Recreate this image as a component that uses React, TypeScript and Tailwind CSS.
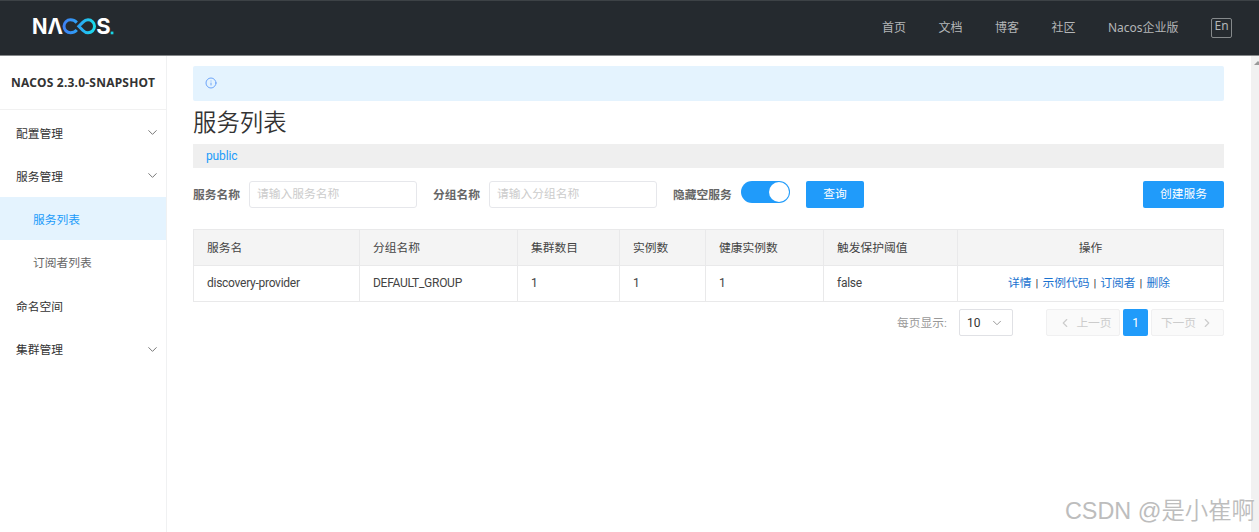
import { ChevronDown, ChevronLeft, ChevronRight, Info } from 'lucide-react';

const navItems = [
  { label: '首页', width: 'w-[56.5px]' },
  { label: '文档', width: 'w-[56.5px]' },
  { label: '博客', width: 'w-[56.5px]' },
  { label: '社区', width: 'w-[56.5px]' },
  { label: 'Nacos企业版', width: 'w-[103px]' },
];

const menu = [
  { label: '配置管理', expandable: true },
  { label: '服务管理', expandable: true },
  { label: '服务列表', child: true, active: true },
  { label: '订阅者列表', child: true },
  { label: '命名空间' },
  { label: '集群管理', expandable: true },
];

const columns = ['服务名', '分组名称', '集群数目', '实例数', '健康实例数', '触发保护阈值'];
const services = [['discovery-provider', 'DEFAULT_GROUP', '1', '1', '1', 'false']];
const actions = ['详情', '示例代码', '订阅者', '删除'];

function Logo() {
  return (
    <svg width="92" height="40" viewBox="-4 -8 92 40" aria-label="NACOS" className="ml-7 mt-[7px] shrink-0">
      <defs>
        <linearGradient id="loop" gradientUnits="userSpaceOnUse" x1="31" y1="0" x2="64" y2="0">
          <stop offset="0" stopColor="#3f7ff5" />
          <stop offset="0.5" stopColor="#2ba6f5" />
          <stop offset="1" stopColor="#18e0ea" />
        </linearGradient>
      </defs>
      <g fill="#fff" fontFamily="Inter" fontWeight="700" fontSize="21">
        <text x="0" y="18.3" textLength="15.5" lengthAdjust="spacingAndGlyphs">N</text>
        <text x="15.6" y="18.3" textLength="15.5" lengthAdjust="spacingAndGlyphs">Λ</text>
        <text x="64.2" y="18.3" textLength="14.4" lengthAdjust="spacingAndGlyphs">S</text>
      </g>
      <path
        d="M44.8 6.6 C43.1 4.8 41 3.8 38.5 3.8 A6.5 6.5 0 0 0 38.5 16.8 C41 16.8 43.1 15.8 44.8 14"
        fill="none"
        stroke="url(#loop)"
        strokeWidth="3"
      />
      <path
        d="M46.8 10.3 L51 6.1 C52.6 4.5 54.2 3.8 56 3.8 A6.5 6.5 0 0 1 56 16.8 C54.2 16.8 52.6 16.1 51 14.5 Z"
        fill="none"
        stroke="url(#loop)"
        strokeWidth="3"
      />
      <rect x="78.7" y="15.6" width="2.7" height="2.7" fill="#18d5e5" />
    </svg>
  );
}

function Header() {
  return (
    <header className="flex h-[56px] shrink-0 justify-between border-b border-t border-b-[#85888a] border-t-[#3d4246] bg-[#252a2f] pr-[27px] text-[#b4b6b8]">
      <Logo />
      <nav className="flex h-[53px] items-center font-['Noto_Sans','Noto_Sans_CJK_SC',sans-serif]">
        {navItems.map((item) => (
          <a key={item.label} className={`${item.width} whitespace-nowrap text-[12px]`}>
            {item.label}
          </a>
        ))}
        <span className="flex h-[20px] w-[21px] items-center justify-center rounded-[2px] border border-[#85898b] pb-[3px] text-[12px]">
          En
        </span>
      </nav>
    </header>
  );
}

function Sidebar() {
  return (
    <aside className="w-[167px] shrink-0 border-r border-[#f0f1f2]">
      <div className="flex h-[54.4px] items-center whitespace-nowrap border-b border-[#f1f1f1] pl-[11px] font-['Noto_Sans',sans-serif] text-[12px] font-bold tracking-[0.22px] text-[#333]">
        NACOS 2.3.0-SNAPSHOT
      </div>
      <ul>
        {menu.map((item) => (
          <li
            key={item.label}
            className={`flex h-[43.3px] items-center justify-between pr-[6px] pt-[3px] ${item.child ? 'pl-[33px]' : 'pl-4'} ${
              item.active ? 'bg-[#e4f3fe] text-[#209bfa]' : item.child ? 'text-[#666]' : 'text-[#333]'
            }`}
          >
            {item.label}
            {item.expandable && <ChevronDown size={15} strokeWidth={1.6} className="-mt-0.5 text-[#777]" />}
          </li>
        ))}
      </ul>
    </aside>
  );
}

function SearchBar() {
  return (
    <div className="mt-[13px] flex h-[27px] items-center">
      <label className="w-[56px] font-bold text-[#666]">服务名称</label>
      <input
        placeholder="请输入服务名称"
        className="h-[27px] w-[168px] rounded-[3px] border border-[#e6e7eb] px-[7px] pb-0.5 outline-none placeholder:text-[#ccc]"
      />
      <label className="ml-4 w-[56px] font-bold text-[#666]">分组名称</label>
      <input
        placeholder="请输入分组名称"
        className="h-[27px] w-[168px] rounded-[3px] border border-[#e6e7eb] px-[7px] pb-0.5 outline-none placeholder:text-[#ccc]"
      />
      <label className="ml-4 w-[68px] font-bold text-[#666]">隐藏空服务</label>
      <span className="mb-[5px] flex h-[22px] w-[49px] items-center justify-end rounded-full bg-[#209bfa] pr-px">
        <span className="size-[20px] rounded-full bg-white" />
      </span>
      <button className="ml-4 h-[27px] w-[58px] rounded-[2px] bg-[#209bfa] pb-0.5 text-white">查询</button>
      <button className="ml-auto h-[27px] w-[81px] rounded-[2px] bg-[#209bfa] pb-0.5 text-white">创建服务</button>
    </div>
  );
}

function ServiceTable() {
  return (
    <table className="mt-[21px] w-full table-fixed border-collapse text-left text-[#444]">
      <colgroup>
        <col className="w-[166px]" />
        <col className="w-[158px]" />
        <col className="w-[102px]" />
        <col className="w-[86px]" />
        <col className="w-[118px]" />
        <col className="w-[134px]" />
        <col />
      </colgroup>
      <thead>
        <tr className="h-[36px] bg-[#f4f4f4]">
          {columns.map((name) => (
            <th key={name} className="border border-[#e9e9ea] px-[13px] font-normal">
              {name}
            </th>
          ))}
          <th className="border border-[#e9e9ea] text-center font-normal">操作</th>
        </tr>
      </thead>
      <tbody>
        {services.map((row) => (
          <tr key={row[0]} className="h-[36px]">
            {row.map((cell, i) => (
              <td key={i} className="border border-[#e9e9ea] px-[13px] pb-0.5 text-[12px] tracking-[-0.27px]">
                {cell}
              </td>
            ))}
            <td className="border border-[#e9e9ea] pb-0.5 pr-[3px] text-center">
              {actions.map((action, i) => (
                <span key={action}>
                  {i > 0 && <span className="mx-[4px]">|</span>}
                  <a className="text-[#1a73d0]">{action}</a>
                </span>
              ))}
            </td>
          </tr>
        ))}
      </tbody>
    </table>
  );
}

function Pagination() {
  return (
    <div className="mt-[7px] flex h-[27px] items-center justify-end">
      <span className="mr-[5px] w-[57px] whitespace-nowrap text-[#999]">每页显示:</span>
      <div className="flex h-[27px] w-[54px] items-center justify-between rounded-[2px] border border-[#e0e1e5] pl-[7px] pr-[8px] text-[12px] text-[#333]">
        10
        <ChevronDown size={14} strokeWidth={1.7} className="text-[#999]" />
      </div>
      <button className="ml-[33px] flex h-[27px] w-[74px] items-center justify-center gap-1 rounded-[2px] border border-[#f0f0f1] bg-[#fafafa] pl-1 text-[#ccc]">
        <ChevronLeft size={14} />
        上一页
      </button>
      <button className="ml-[3px] h-[27px] w-[25px] rounded-[2px] bg-[#209bfa] text-[12px] text-white">1</button>
      <button className="ml-[3px] flex h-[27px] w-[73px] items-center justify-center gap-1 rounded-[2px] border border-[#f0f0f1] bg-[#fafafa] text-[#ccc]">
        下一页
        <ChevronRight size={14} />
      </button>
    </div>
  );
}

export default function App() {
  return (
    <div className="relative flex h-[532px] w-[1259px] flex-col overflow-hidden bg-white font-['Roboto','Noto_Sans_CJK_SC',sans-serif] text-[11.75px] leading-[18px]">
      <Header />
      <div className="flex min-h-0 flex-1">
        <Sidebar />
        <main className="min-w-0 flex-1 pl-[26px] pr-[27px] pt-[10px]">
          <div className="flex h-[35px] items-center rounded-[2px] bg-[#e4f3fe] pb-px pl-3">
            <Info size={12} strokeWidth={1.8} className="text-[#5f9bf8]" />
          </div>
          <h1 className="h-[43px] pt-[5px] text-[23.4px] font-[350] leading-[35px] text-[#333]">服务列表</h1>
          <div className="flex h-[24px] items-center bg-[#efefef] pb-px pl-[13px] text-[12px] tracking-[-0.15px] text-[#209bfa]">
            public
          </div>
          <SearchBar />
          <ServiceTable />
          <Pagination />
        </main>
        <div className="flex w-2 shrink-0 justify-end overflow-hidden bg-[#f1f1f1] pt-[5px]">
          <svg width="5" height="4" viewBox="0 0 5 4">
            <path d="M0 4 L4 0 L5 1 V4 Z" fill="#999" />
          </svg>
        </div>
      </div>
      <div className="absolute bottom-[5px] right-[4px] whitespace-nowrap font-['Liberation_Sans','Noto_Sans_CJK_SC',sans-serif] text-[23.4px] font-[350] leading-[32px] text-[#bdbdbd] [text-shadow:-1px_-1px_0_#fff]">
        CSDN @是小崔啊
      </div>
    </div>
  );
}
